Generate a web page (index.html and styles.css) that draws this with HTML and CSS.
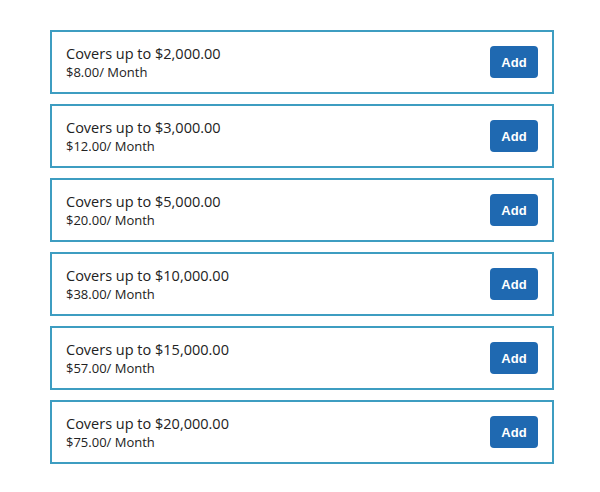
FILE: index.html
```html
<!DOCTYPE html>
<html>
<head>
<meta charset="utf-8">
<link rel="stylesheet" href="styles.css">
</head>
<body>
<div class="list">
  <div class="card"><div class="info"><div class="title">Covers up to $2,000.00</div><div class="price">$8.00/ Month</div></div><button class="add">Add</button></div>
  <div class="card"><div class="info"><div class="title">Covers up to $3,000.00</div><div class="price">$12.00/ Month</div></div><button class="add">Add</button></div>
  <div class="card"><div class="info"><div class="title">Covers up to $5,000.00</div><div class="price">$20.00/ Month</div></div><button class="add">Add</button></div>
  <div class="card"><div class="info"><div class="title">Covers up to $10,000.00</div><div class="price">$38.00/ Month</div></div><button class="add">Add</button></div>
  <div class="card"><div class="info"><div class="title">Covers up to $15,000.00</div><div class="price">$57.00/ Month</div></div><button class="add">Add</button></div>
  <div class="card"><div class="info"><div class="title">Covers up to $20,000.00</div><div class="price">$75.00/ Month</div></div><button class="add">Add</button></div>
</div>
</body>
</html>
```
FILE: styles.css
```css
html, body { margin: 0; background: #fff; }
.list {
  display: flex;
  flex-direction: column;
  gap: 10px;
  padding: 30px 0 0 50px;
  width: 504px;
}
.card {
  box-sizing: border-box;
  height: 64px;
  border: 2px solid #3d9dc1;
  display: flex;
  align-items: center;
  justify-content: space-between;
  padding: 0 14px 0 14px;
  font-family: "Open Sans", sans-serif;
  color: #222;
}
.title { font-size: 14.5px; line-height: 19px; }
.price { font-size: 13px; line-height: 18px; }
.add {
  width: 48px;
  height: 32px;
  border: none;
  border-radius: 4px;
  background: #1f69b1;
  color: #fff;
  font-family: "Liberation Sans", sans-serif;
  font-weight: bold;
  font-size: 13px;
  padding: 0;
}
```
